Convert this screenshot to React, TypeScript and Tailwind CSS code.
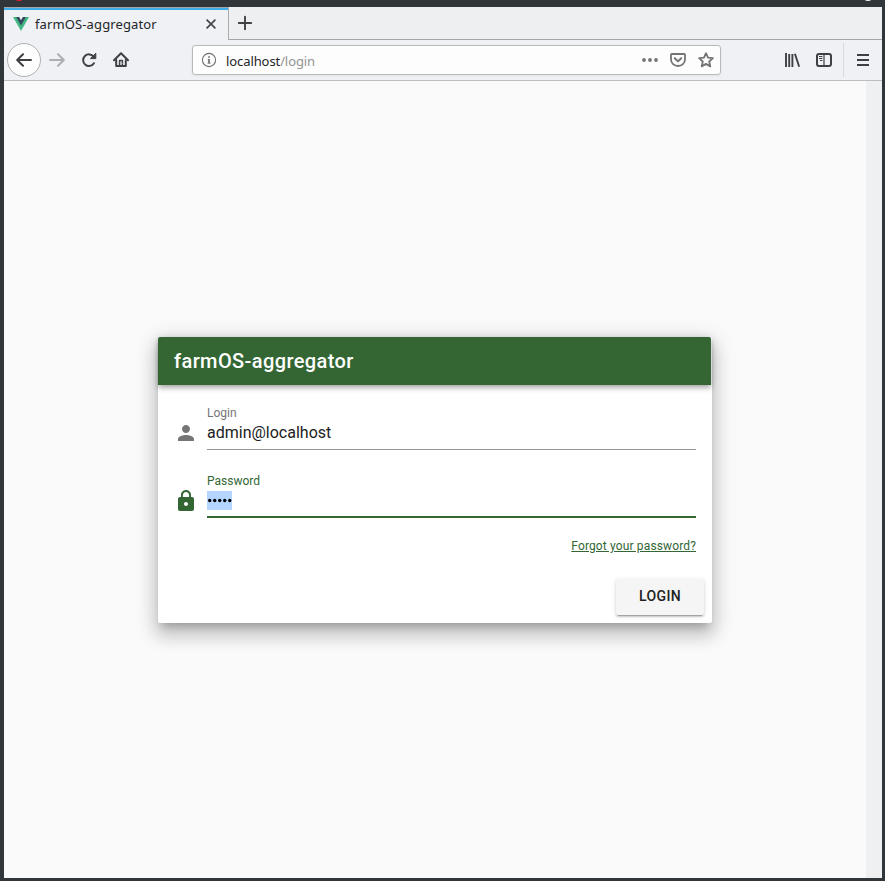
import type { ReactNode } from "react";

function Icon({ children, className = "", size = 16, box = 16 }: { children: ReactNode; className?: string; size?: number; box?: number }) {
  return (
    <svg className={`block shrink-0 ${className}`} width={size} height={size} viewBox={`0 0 ${box} ${box}`} fill="none" stroke="currentColor" strokeWidth={2} strokeLinecap="round" strokeLinejoin="round">
      {children}
    </svg>
  );
}

function TabStrip() {
  return (
    <div className="flex h-[33px] shrink-0 bg-[#eeeff1]">
      <div className="flex h-[33px] w-[225px] shrink-0 flex-col border-t border-r border-t-[#a3a7a9] border-r-[#a9adaf] bg-[#f0f1f4]">
        <div className="h-[2px] w-full shrink-0 bg-[#3daee9]" />
        <div className="flex h-[28px] items-center pl-[9px]">
          <svg className="block shrink-0" width="16" height="14" viewBox="0 0 16 14">
            <path d="M0 0h16L8 14z" fill="#42b883" />
            <path d="M3.2 0h9.6L8 8.4z" fill="#35495e" />
            <path d="M6.1 0h3.8L8 3.2z" fill="#f0f1f4" />
          </svg>
          <span className="ml-[6px] w-[168px] whitespace-nowrap text-[13px] leading-[18px] tracking-[0.12px] text-[#232629]">farmOS-aggregator</span>
          <Icon className="text-[#45484b]">
            <path d="M3.6 3.6l8.8 8.8M12.4 3.6l-8.8 8.8" strokeWidth="1.7" strokeLinecap="butt" />
          </Icon>
        </div>
      </div>
      <div className="flex flex-1 items-start border-b border-[#a3a7a9] pt-2 pl-2">
        <Icon className="text-[#3f4144]">
          <path d="M8 1.8v12.4M1.8 8h12.4" strokeWidth="1.9" />
        </Icon>
      </div>
    </div>
  );
}

function Toolbar() {
  return (
    <div className="flex h-[41px] shrink-0 items-center border-b border-[#bcbdbf] bg-[#f0f1f4] pl-[3px] text-[#3f4043]">
      <div className="flex size-[34px] shrink-0 items-center justify-center rounded-full border border-[#b0b1b3] bg-[#fdfdfd]">
        <Icon>
          <path d="M15 8H1.5M7 2.2L1.2 8 7 13.8" />
        </Icon>
      </div>
      <Icon className="ml-2 text-[#aeafb2]">
        <path d="M1 8h13.5M9 2.2L14.8 8 9 13.8" />
      </Icon>
      <Icon className="ml-4">
        <path d="M12.6 4.7A5.8 5.8 0 1 0 12.9 11.2" />
        <path d="M14.8 1.6v5H9.8z" fill="currentColor" strokeWidth="1" />
      </Icon>
      <Icon className="ml-4">
        <path d="M1 8.3L8 1.3l7 7" />
        <path d="M3.2 8v6.1h9.6V8" />
        <path d="M6.6 14V8.4h2.8V14" strokeWidth="1.5" />
        <path d="M9 11v.6" stroke="#f0f1f4" strokeWidth="1" strokeLinecap="butt" />
      </Icon>
      <div className="ml-[63px] flex h-[30px] w-[529px] shrink-0 items-center rounded-[3px] border border-[#b9babc] bg-[#fdfdfd] pl-2 shadow-[0_1px_3px_rgba(0,0,0,0.06)]">
        <Icon className="text-[#6e6f70]">
          <circle cx="8" cy="8" r="6.6" strokeWidth="1.1" />
          <path d="M8 7v4.4M8 4.2v1.6" strokeWidth="1.7" strokeLinecap="butt" />
          <path d="M6.7 7.4H8M6.4 11.1h3.2" strokeWidth="0.8" strokeLinecap="butt" />
        </Icon>
        <div className="ml-[9px] flex-1 pt-[2px] text-[13px] leading-[18px] tracking-[-0.09px] text-[#929394]">
          <span className="text-[#232629]">localhost</span>/login
        </div>
        <Icon className="text-[#737475]">
          <g fill="currentColor" stroke="none">
            <circle cx="2" cy="8" r="1.9" />
            <circle cx="8" cy="8" r="1.9" />
            <circle cx="14" cy="8" r="1.9" />
          </g>
        </Icon>
        <Icon className="ml-3 text-[#737475]">
          <path d="M1.8 2h12.4q.8 0 .8.8V7.5a7 6.5 0 0 1-14 0V2.8Q1 2 1.8 2z" strokeWidth="1.8" />
          <path d="M4.8 6.3L8 9.4l3.2-3.1" />
        </Icon>
        <Icon className="mr-[6px] ml-3 text-[#737475]">
          <path d="M8 1.2l2 4.5 4.9.5-3.7 3.3 1.1 4.9L8 11.9l-4.3 2.5 1.1-4.9L1.1 6.2 6 5.7z" strokeWidth="1.8" />
        </Icon>
      </div>
      <Icon className="ml-[63px]">
        <path d="M2 1v14M5.2 2v13M8.4 2v13M10.9 1.8L15.2 14.8" strokeLinecap="butt" strokeWidth="1.9" />
      </Icon>
      <Icon className="ml-4">
        <rect x="1" y="2" width="14" height="12" rx="2" />
        <path d="M8 2v12" strokeWidth="1.2" />
        <path d="M3 4.5h3.4M3 6.5h3.4M4 8.5h2.4" strokeWidth="1" strokeLinecap="butt" />
      </Icon>
      <div className="ml-[11px] h-[34px] w-px bg-[#d8d9dc]" />
      <Icon className="ml-[11px]">
        <path d="M2 3h12M2 8h12M2 13h12" strokeWidth="2" strokeLinecap="butt" />
      </Icon>
    </div>
  );
}

function LoginCard() {
  return (
    <div className="h-[286px] w-[554px] rounded-[2px] bg-white font-[Roboto,sans-serif] shadow-[0_7px_8px_-4px_rgba(0,0,0,0.2),0_12px_17px_2px_rgba(0,0,0,0.14),0_5px_22px_4px_rgba(0,0,0,0.12)]">
      <div className="mr-px flex h-12 items-center rounded-t-[2px] bg-[#336633] px-4 text-[20px] font-medium tracking-[0.4px] text-white shadow-[0_2px_4px_-1px_rgba(0,0,0,0.2),0_4px_5px_rgba(0,0,0,0.14),0_1px_10px_rgba(0,0,0,0.12)]">
        farmOS-aggregator
      </div>
      <div className="flex h-[68px] pt-5 pr-4 pl-4">
        <svg className="mt-4 block shrink-0 text-[#757575]" width="24" height="24" viewBox="0 0 24 24" fill="currentColor">
          <path d="M12 12c2.21 0 4-1.79 4-4s-1.79-4-4-4-4 1.79-4 4 1.79 4 4 4zm0 2c-2.67 0-8 1.34-8 4v2h16v-2c0-2.66-5.33-4-8-4z" />
        </svg>
        <div className="ml-[9px] h-[45px] flex-1 border-b border-[#949494]">
          <div className="h-4 text-[12px] leading-4 text-[#757575]">Login</div>
          <div className="text-[16px] leading-6 text-[#212121]">admin@localhost</div>
        </div>
      </div>
      <div className="flex h-[84px] pt-5 pr-4 pl-4">
        <svg className="mt-4 block shrink-0 text-[#336633]" width="24" height="24" viewBox="0 0 24 24" fill="currentColor">
          <path d="M18 8h-1V6c0-2.76-2.24-5-5-5S7 3.24 7 6v2H6c-1.1 0-2 .9-2 2v10c0 1.1.9 2 2 2h12c1.1 0 2-.9 2-2V10c0-1.1-.9-2-2-2zm-6 9c-1.1 0-2-.9-2-2s.9-2 2-2 2 .9 2 2-.9 2-2 2zm3.1-9H8.9V6c0-1.71 1.39-3.1 3.1-3.1 1.71 0 3.1 1.39 3.1 3.1v2z" />
        </svg>
        <div className="ml-[9px] h-[45px] flex-1 border-b-2 border-[#336633]">
          <div className="h-4 text-[12px] leading-4 text-[#336633]">Password</div>
          <div className="mt-[2px] flex h-[19px] w-[25px] items-center bg-[#b3d5ff] pl-px">
            <svg className="block" width="24" height="5" viewBox="0 0 24 5" fill="#000">
              <circle cx="1.7" cy="2.5" r="1.7" />
              <circle cx="6.7" cy="2.5" r="1.7" />
              <circle cx="11.7" cy="2.5" r="1.7" />
              <circle cx="16.7" cy="2.5" r="1.7" />
              <circle cx="21.7" cy="2.5" r="1.7" />
            </svg>
          </div>
        </div>
      </div>
      <div className="flex justify-end pr-4 text-[12px] leading-[18px] tracking-[0.14px] text-[#336633]">
        <span className="underline">Forgot your password?</span>
      </div>
      <div className="flex justify-end pt-[24px] pr-2">
        <button className="h-9 w-[88px] rounded-[2px] bg-[#f5f5f5] pb-[2px] text-[14px] font-medium tracking-[0.4px] text-[#212121] shadow-[0_3px_1px_-2px_rgba(0,0,0,0.2),0_2px_2px_rgba(0,0,0,0.14),0_1px_5px_rgba(0,0,0,0.12)]">LOGIN</button>
      </div>
    </div>
  );
}

export default function App() {
  return (
    <div className="relative flex h-[881px] w-[885px] flex-col overflow-hidden bg-[#31363b] pt-[7px] pr-[3px] pb-[3px] pl-1 font-['Noto_Sans',sans-serif]">
      <div className="absolute -top-[11px] left-[13px] size-3 rounded-full bg-[#ed1c2e]" />
      <div className="absolute -top-[11px] left-[862px] size-3 rounded-full bg-[#fcfcfc]" />
      <TabStrip />
      <Toolbar />
      <div className="flex min-h-0 flex-1">
        <div className="flex w-[862px] justify-center bg-[#fafafa] pt-64">
          <LoginCard />
        </div>
        <div className="flex-1 bg-[#eff0f2]" />
      </div>
    </div>
  );
}
